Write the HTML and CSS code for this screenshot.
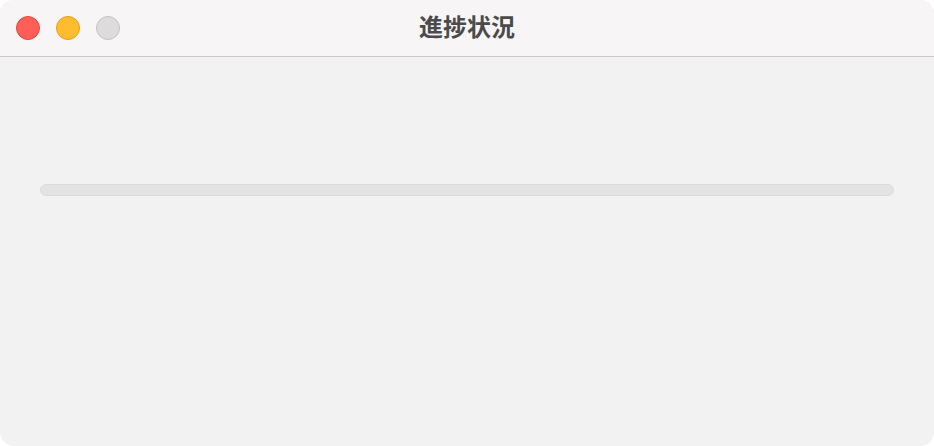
FILE: index.html
```html
<!DOCTYPE html>
<html lang="ja">
<head>
<meta charset="utf-8">
<link rel="stylesheet" href="styles.css">
</head>
<body>
<div class="window">
  <header class="titlebar">
    <div class="lights">
      <span class="light red"></span>
      <span class="light yellow"></span>
      <span class="light grey"></span>
    </div>
    <h1 class="title">進捗状況</h1>
  </header>
  <main class="content">
    <div class="progress"><div class="progress-fill" style="width:0%"></div></div>
  </main>
</div>
</body>
</html>
```

FILE: styles.css
```css
html, body {
  margin: 0;
  padding: 0;
  background: #ffffff;
}
.window {
  width: 934px;
  height: 446px;
  border-radius: 14px;
  overflow: hidden;
  background: #f2f2f2;
  display: flex;
  flex-direction: column;
}
.titlebar {
  position: relative;
  height: 57px;
  flex: 0 0 57px;
  background: #f7f5f6;
  border-bottom: 1px solid #c9c9c9;
  box-sizing: border-box;
  display: flex;
  align-items: center;
  justify-content: center;
  padding-bottom: 5px;
}
.lights {
  position: absolute;
  left: 16px;
  top: 16px;
  display: flex;
  gap: 16px;
}
.light {
  width: 24px;
  height: 24px;
  border-radius: 50%;
  box-sizing: border-box;
}
.red { background: #ff5f57; border: 1px solid #e2463f; }
.yellow { background: #febc2e; border: 1px solid #e1a116; }
.grey { background: #dddbdc; border: 1px solid #c4c2c3; }
.title {
  margin: 0;
  font-family: "Noto Sans CJK JP", "Noto Sans", sans-serif;
  font-weight: 700;
  font-size: 24px;
  color: #4b4b4b;
  line-height: 1;
}
.content {
  flex: 1;
  padding: 127px 40px 0 40px;
}
.progress {
  height: 12px;
  border-radius: 6px;
  background: #e3e3e3;
  border: 1px solid #dcdcdc;
  box-sizing: border-box;
  overflow: hidden;
}
.progress-fill {
  height: 100%;
  background: #3478f6;
}
```
